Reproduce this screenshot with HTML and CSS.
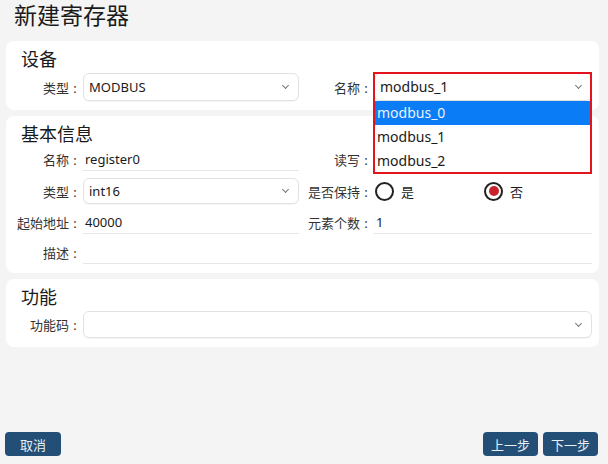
FILE: index.html
```html
<!DOCTYPE html>
<html lang="zh">
<head>
  <meta charset="UTF-8" />
  <title>新建寄存器</title>
  <link rel="stylesheet" href="styles.css">
</head>
<body>
  <h1 class="title">新建寄存器</h1>

  <div class="card">
    <h2>设备</h2>
    <div class="grid">
      <label class="lbl">类型</label>
      <div class="select">MODBUS<span class="chev"></span></div>
      <label class="lbl">名称</label>
      <div class="select-wrap">
        <div class="select">modbus_1<span class="chev"></span></div>
        <div class="dropdown">
          <div class="opt active">modbus_0</div>
          <div class="opt">modbus_1</div>
          <div class="opt">modbus_2</div>
        </div>
      </div>
    </div>
  </div>

  <div class="card">
    <h2>基本信息</h2>
    <div class="grid">
      <label class="lbl">名称</label>
      <div class="input">register0</div>
      <label class="lbl">读写</label>
      <div class="input"></div>

      <label class="lbl">类型</label>
      <div class="select small">int16<span class="chev"></span></div>
      <label class="lbl">是否保持</label>
      <div class="radios">
        <span class="radio"><span class="dot"></span>是</span>
        <span class="radio checked"><span class="dot"></span>否</span>
      </div>

      <label class="lbl">起始地址</label>
      <div class="input">40000</div>
      <label class="lbl">元素个数</label>
      <div class="input">1</div>

      <label class="lbl">描述</label>
      <div class="input wide"></div>
    </div>
  </div>

  <div class="card">
    <h2>功能</h2>
    <div class="grid">
      <label class="lbl">功能码</label>
      <div class="select mid wide"><span class="chev"></span></div>
    </div>
  </div>

  <div class="footer">
    <button class="btn">取消</button>
    <div class="steps">
      <button class="btn">上一步</button>
      <button class="btn">下一步</button>
    </div>
  </div>
</body>
</html>
```

FILE: styles.css
```css
html, body {
  margin: 0;
  padding: 0;
  height: 100%;
}

body {
  background: #f4f4f4;
  font-family: 'Noto Sans', 'Noto Sans CJK SC', sans-serif;
  color: #1a1a1a;
  font-size: 13px;
  display: flex;
  flex-direction: column;
  padding: 0 9px 0 6px;
  box-sizing: border-box;
}

.title {
  font-size: 23px;
  font-weight: 400;
  margin: 0 0 7px 8px;
  height: 34px;
  line-height: 30px;
}

.card {
  background: #fff;
  border-radius: 8px;
  padding: 5px 7px 9px 0;
  margin-bottom: 6px;
}

.card h2 {
  font-size: 18px;
  font-weight: 400;
  margin: 0 0 1px 15px;
  line-height: 26px;
}

.grid {
  display: grid;
  grid-template-columns: 77px 216px 75px 218px;
  row-gap: 7px;
  align-items: center;
}

.lbl {
  text-align: right;
  padding-right: 2px;
  color: #333;
  white-space: nowrap;
}

/* colon centred in its own cell */
.lbl::after {
  content: ':';
  display: inline-block;
  width: 12px;
  text-align: center;
}

.select {
  position: relative;
  height: 28px;
  box-sizing: border-box;
  border: 1px solid #e2e2e2;
  border-radius: 6px;
  padding: 0 24px 0 5px;
  line-height: 26px;
  font-size: 13px;
  background: #fff;
  box-shadow: 0 1px 1px rgba(0, 0, 0, 0.04);
}

.select.small {
  height: 26px;
  line-height: 24px;
}

.select.mid {
  height: 27px;
}

.chev {
  position: absolute;
  right: 10px;
  top: 50%;
  margin-top: -4px;
  width: 4px;
  height: 4px;
  border-right: 1px solid #777;
  border-bottom: 1px solid #777;
  transform: rotate(45deg);
}

.wide {
  grid-column: 2 / 5;
}

.input {
  height: 22px;
  line-height: 22px;
  border-bottom: 1px solid #e6e6e6;
  padding-left: 2px;
}

.radios {
  display: flex;
  height: 26px;
  align-items: center;
}

.radio {
  display: flex;
  align-items: center;
  gap: 7px;
  width: 112px;
  padding-left: 1px;
}

.radio .dot {
  width: 15px;
  height: 15px;
  border: 2px solid #222;
  border-radius: 50%;
  box-sizing: content-box;
  position: relative;
}

.radio.checked .dot::after {
  content: '';
  position: absolute;
  left: 2.5px;
  top: 2.5px;
  width: 10px;
  height: 10px;
  border-radius: 50%;
  background: #c9222c;
}

.select-wrap {
  position: relative;
}

.select-wrap .select {
  font-size: 14px;
  border-color: #e0e0e0;
}

.select-wrap::before {
  content: '';
  position: absolute;
  left: -1px;
  top: -1px;
  width: 219px;
  height: 102px;
  border: 2px solid #e3141e;
  box-sizing: border-box;
  z-index: 3;
}

.dropdown {
  position: absolute;
  left: 1px;
  top: 28px;
  width: 215px;
  background: #fff;
  z-index: 2;
  font-size: 14px;
}

.opt {
  height: 24px;
  line-height: 24px;
  padding-left: 2px;
}

.opt.active {
  background: #0a7cf5;
  color: #e8f2ff;
}

.footer {
  margin-top: auto;
  display: flex;
  justify-content: space-between;
  padding: 0 1px 8px 0;
  margin-left: -1px;
}

.steps {
  display: flex;
  gap: 5px;
}

.btn {
  background: #234f76;
  color: #e8eef4;
  border: none;
  border-radius: 4px;
  height: 24px;
  padding: 0 15px;
  font-family: 'Noto Sans CJK SC', sans-serif;
  font-size: 13px;
}

.steps .btn {
  padding: 0 8px;
}
```
